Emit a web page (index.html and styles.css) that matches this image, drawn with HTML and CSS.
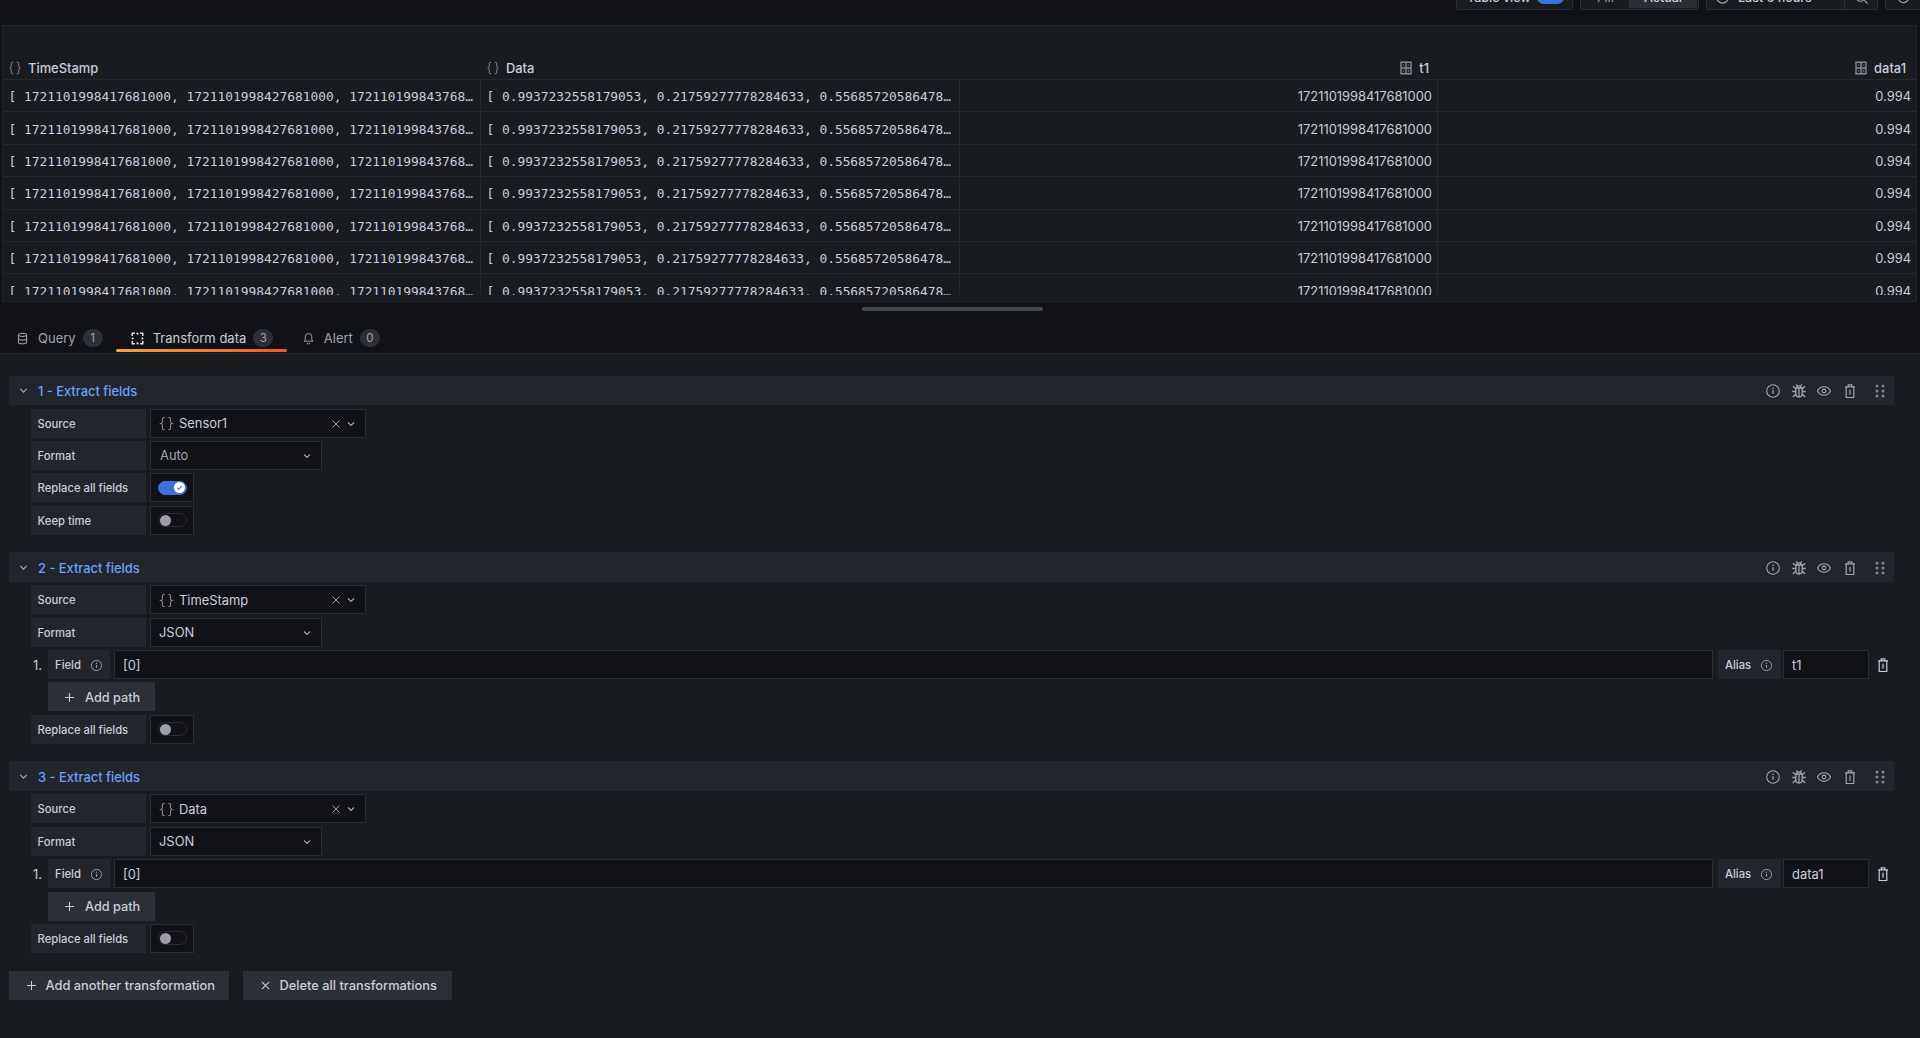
FILE: index.html
```html
<!DOCTYPE html>
<html lang="en">
<head>
<meta charset="utf-8">
<title>Transform data</title>
<link rel="stylesheet" href="styles.css">
</head>
<body>
<svg class="defs" width="0" height="0" aria-hidden="true">
  <defs>
    <symbol id="i-braces" viewBox="0 0 16 16"><path d="M6 1.5H5.2C4.2 1.5 3.7 2 3.7 3v3c0 1-.6 1.7-1.7 2 1.1.3 1.7 1 1.7 2v3c0 1 .5 1.5 1.5 1.5H6M10 1.5h.8c1 0 1.5.5 1.5 1.5v3c0 1 .6 1.7 1.7 2-1.1.3-1.7 1-1.7 2v3c0 1-.5 1.5-1.5 1.5H10" fill="none" stroke="currentColor" stroke-width="1.1"/></symbol>
    <symbol id="i-calc" viewBox="0 0 16 16"><path fill-rule="evenodd" fill="currentColor" d="M1.500.5h13v15h-13zM3 2.200v4.800h4.200V2.200zM8.800 2.200v4.800H13V2.200zM3 8.800v5h4.200v-5zM8.800 8.800v5H13v-5z"/><path d="M4.200 4.600h1.800M10 4.600h1.800M4.200 11.300h1.800M10 10.400h1.800M10 12.300h1.800" stroke="currentColor" stroke-width="1"/></symbol>
    <symbol id="i-db" viewBox="0 0 16 16"><path d="M3 3.500C3 2.300 5.200 1.500 8 1.500s5 .8 5 2v9c0 1.200-2.200 2-5 2s-5-.8-5-2zM3 3.500c0 1.200 2.200 2 5 2s5-.8 5-2M3 8c0 1.200 2.200 2 5 2s5-.8 5-2" fill="none" stroke="currentColor" stroke-width="1.300"/></symbol>
    <symbol id="i-process" viewBox="0 0 16 16"><path d="M1.500 4.800V1.500h3.300M11.200 1.500h3.300v3.300M14.500 11.200v3.300h-3.300M4.800 14.500H1.500v-3.300" fill="none" stroke="currentColor" stroke-width="1.800"/><circle cx="2" cy="8" r="1.300" fill="currentColor"/><circle cx="8" cy="2" r="1.300" fill="currentColor"/><circle cx="14" cy="8" r="1.300" fill="currentColor"/><circle cx="8" cy="14" r="1.300" fill="currentColor"/></symbol>
    <symbol id="i-bell" viewBox="0 0 16 16"><path d="M8 1.800a4 4 0 0 1 4 4v3.500l1.300 2H2.700l1.300-2V5.800a4 4 0 0 1 4-4zM6.300 13.600a1.800 1.800 0 0 0 3.400 0" fill="none" stroke="currentColor" stroke-width="1.200"/></symbol>
    <symbol id="i-chev" viewBox="0 0 16 16"><path d="M4 6l4 4 4-4" fill="none" stroke="currentColor" stroke-width="1.500"/></symbol>
    <symbol id="i-x" viewBox="0 0 16 16"><path d="M3.500 3.500l9 9M12.500 3.500l-9 9" fill="none" stroke="currentColor" stroke-width="1.300"/></symbol>
    <symbol id="i-plus" viewBox="0 0 16 16"><path d="M8 2.500v11M2.500 8h11" fill="none" stroke="currentColor" stroke-width="1.300"/></symbol>
    <symbol id="i-info" viewBox="0 0 16 16"><circle cx="8" cy="8" r="6.300" fill="none" stroke="currentColor" stroke-width="1.100"/><path d="M8 7.300v3.500" stroke="currentColor" stroke-width="1.300"/><circle cx="8" cy="5.200" r=".8" fill="currentColor"/></symbol>
    <symbol id="i-bug" viewBox="0 0 16 16"><path d="M4.800 5h6.400v5.800a3.200 3.200 0 0 1-6.400 0zM5.800 5a2.200 2.200 0 0 1 4.400 0M8 5v8.800M5.300 1.500l1.300 1.800M10.700 1.500L9.400 3.300M1.800 3.300l3 2.500M14.200 3.300l-3 2.500M1.300 8.500h3.500M14.700 8.500h-3.500M1.800 14l3.300-3.200M14.200 14l-3.300-3.200" fill="none" stroke="currentColor" stroke-width="1.300"/></symbol>
    <symbol id="i-eye" viewBox="0 0 16 16"><path d="M1.500 8C3 5.200 5.300 3.800 8 3.800S13 5.200 14.500 8C13 10.800 10.700 12.200 8 12.200S3 10.800 1.500 8z" fill="none" stroke="currentColor" stroke-width="1.100"/><circle cx="8" cy="8" r="1.900" fill="none" stroke="currentColor" stroke-width="1.100"/></symbol>
    <symbol id="i-trash" viewBox="0 0 16 16"><path d="M3 3.800h10M6.200 3.800V1.800h3.600v2M4.200 3.800v10.700h7.600V3.800M8 6.800v5" fill="none" stroke="currentColor" stroke-width="1.200"/></symbol>
    <symbol id="i-grip" viewBox="0 0 16 16"><g fill="currentColor"><circle cx="5" cy="3" r="1.500"/><circle cx="11" cy="3" r="1.500"/><circle cx="5" cy="8" r="1.500"/><circle cx="11" cy="8" r="1.500"/><circle cx="5" cy="13" r="1.500"/><circle cx="11" cy="13" r="1.500"/></g></symbol>
    <symbol id="i-clock" viewBox="0 0 16 16"><circle cx="8" cy="8" r="6" fill="none" stroke="currentColor" stroke-width="1.200"/><path d="M8 4.500V8l2.500 1.500" fill="none" stroke="currentColor" stroke-width="1.200"/></symbol>
    <symbol id="i-zoom" viewBox="0 0 16 16"><circle cx="7" cy="7" r="5" fill="none" stroke="currentColor" stroke-width="1.300"/><path d="M11 11l3.500 3.500M5 7h4" fill="none" stroke="currentColor" stroke-width="1.300"/></symbol>
    <symbol id="i-sync" viewBox="0 0 16 16"><path d="M13.500 8a5.500 5.500 0 1 1-1.700-4M12 1.500V4.300H9.200" fill="none" stroke="currentColor" stroke-width="1.300"/></symbol>
    <symbol id="i-check" viewBox="0 0 16 16"><path d="M4 8.300l2.700 2.700L12 5.500" fill="none" stroke="currentColor" stroke-width="1.800"/></symbol>
  </defs>
</svg>

<div class="page">
  <header class="toolbar">
    <div class="tool tool-view"><span>Table view</span><span class="mini-switch"></span></div>
    <div class="tool tool-radio"><span class="radio-opt">Fill</span><span class="radio-opt radio-on">Actual</span></div>
    <div class="tool tool-time"><svg class="ico ico-16"><use href="#i-clock"/></svg><span class="time-label">Last 6 hours</span><span class="time-zoom"><svg class="ico ico-16"><use href="#i-zoom"/></svg></span></div>
    <div class="tool tool-sync"><svg class="ico ico-16"><use href="#i-sync"/></svg></div>
  </header>

  <section class="panel">
    <div class="grid grid-head">
      <div class="th"><svg class="ico ico-13 muted"><use href="#i-braces"/></svg>TimeStamp</div>
      <div class="th"><svg class="ico ico-13 muted"><use href="#i-braces"/></svg>Data</div>
      <div class="th th-r"><svg class="ico ico-13 muted"><use href="#i-calc"/></svg>t1</div>
      <div class="th th-r"><svg class="ico ico-13 muted"><use href="#i-calc"/></svg>data1</div>
    </div>
    <div class="rows">
      <div class="grid row"><div class="td mono">[ 1721101998417681000, 1721101998427681000, 172110199843768…</div><div class="td mono">[ 0.9937232558179053, 0.21759277778284633, 0.55685720586478…</div><div class="td num">1721101998417681000</div><div class="td num td-last">0.994</div></div>
      <div class="grid row"><div class="td mono">[ 1721101998417681000, 1721101998427681000, 172110199843768…</div><div class="td mono">[ 0.9937232558179053, 0.21759277778284633, 0.55685720586478…</div><div class="td num">1721101998417681000</div><div class="td num td-last">0.994</div></div>
      <div class="grid row"><div class="td mono">[ 1721101998417681000, 1721101998427681000, 172110199843768…</div><div class="td mono">[ 0.9937232558179053, 0.21759277778284633, 0.55685720586478…</div><div class="td num">1721101998417681000</div><div class="td num td-last">0.994</div></div>
      <div class="grid row"><div class="td mono">[ 1721101998417681000, 1721101998427681000, 172110199843768…</div><div class="td mono">[ 0.9937232558179053, 0.21759277778284633, 0.55685720586478…</div><div class="td num">1721101998417681000</div><div class="td num td-last">0.994</div></div>
      <div class="grid row"><div class="td mono">[ 1721101998417681000, 1721101998427681000, 172110199843768…</div><div class="td mono">[ 0.9937232558179053, 0.21759277778284633, 0.55685720586478…</div><div class="td num">1721101998417681000</div><div class="td num td-last">0.994</div></div>
      <div class="grid row"><div class="td mono">[ 1721101998417681000, 1721101998427681000, 172110199843768…</div><div class="td mono">[ 0.9937232558179053, 0.21759277778284633, 0.55685720586478…</div><div class="td num">1721101998417681000</div><div class="td num td-last">0.994</div></div>
      <div class="grid row"><div class="td mono">[ 1721101998417681000, 1721101998427681000, 172110199843768…</div><div class="td mono">[ 0.9937232558179053, 0.21759277778284633, 0.55685720586478…</div><div class="td num">1721101998417681000</div><div class="td num td-last">0.994</div></div>
    </div>
  </section>

  <div class="splitter"><span class="splitter-bar"></span></div>

  <nav class="tabs">
    <div class="tab"><svg class="ico ico-13"><use href="#i-db"/></svg><span>Query</span><span class="badge">1</span></div>
    <div class="tab tab-on"><svg class="ico ico-13"><use href="#i-process"/></svg><span>Transform data</span><span class="badge">3</span></div>
    <div class="tab"><svg class="ico ico-13"><use href="#i-bell"/></svg><span>Alert</span><span class="badge">0</span></div>
  </nav>

  <main class="editor">
    <section class="transform">
      <div class="t-head">
        <svg class="ico ico-13 chev"><use href="#i-chev"/></svg>
        <span class="t-title">1 - Extract fields</span>
        <div class="t-actions">
          <svg class="ico ico-14"><use href="#i-info"/></svg>
          <svg class="ico ico-14"><use href="#i-bug"/></svg>
          <svg class="ico ico-14"><use href="#i-eye"/></svg>
          <svg class="ico ico-14"><use href="#i-trash"/></svg>
          <svg class="ico ico-14 grip"><use href="#i-grip"/></svg>
        </div>
      </div>
      <div class="t-body">
        <div class="f-row"><label class="f-label">Source</label><div class="select select-src"><svg class="ico ico-13 muted"><use href="#i-braces"/></svg><span class="s-val">Sensor1</span><svg class="ico ico-11"><use href="#i-x"/></svg><svg class="ico ico-11"><use href="#i-chev"/></svg></div></div>
        <div class="f-row"><label class="f-label">Format</label><div class="select select-fmt"><span class="s-val s-ph">Auto</span><svg class="ico ico-11"><use href="#i-chev"/></svg></div></div>
        <div class="f-row"><label class="f-label">Replace all fields</label><div class="switch-box"><span class="switch switch-on"><span class="knob"><svg class="ico ico-9"><use href="#i-check"/></svg></span></span></div></div>
        <div class="f-row"><label class="f-label">Keep time</label><div class="switch-box"><span class="switch"><span class="knob"></span></span></div></div>
      </div>
    </section>

    <section class="transform">
      <div class="t-head">
        <svg class="ico ico-13 chev"><use href="#i-chev"/></svg>
        <span class="t-title">2 - Extract fields</span>
        <div class="t-actions">
          <svg class="ico ico-14"><use href="#i-info"/></svg>
          <svg class="ico ico-14"><use href="#i-bug"/></svg>
          <svg class="ico ico-14"><use href="#i-eye"/></svg>
          <svg class="ico ico-14"><use href="#i-trash"/></svg>
          <svg class="ico ico-14 grip"><use href="#i-grip"/></svg>
        </div>
      </div>
      <div class="t-body">
        <div class="f-row"><label class="f-label">Source</label><div class="select select-src"><svg class="ico ico-13 muted"><use href="#i-braces"/></svg><span class="s-val">TimeStamp</span><svg class="ico ico-11"><use href="#i-x"/></svg><svg class="ico ico-11"><use href="#i-chev"/></svg></div></div>
        <div class="f-row"><label class="f-label">Format</label><div class="select select-fmt"><span class="s-val">JSON</span><svg class="ico ico-11"><use href="#i-chev"/></svg></div></div>
        <div class="f-row path-row">
          <span class="path-idx">1.</span>
          <label class="f-label l-field">Field<svg class="ico ico-12"><use href="#i-info"/></svg></label>
          <div class="input input-grow">[0]</div>
          <label class="f-label l-alias">Alias<svg class="ico ico-12"><use href="#i-info"/></svg></label>
          <div class="input input-alias">t1</div>
          <svg class="ico ico-14 path-trash"><use href="#i-trash"/></svg>
        </div>
        <div class="f-row add-row"><button class="btn btn-add"><svg class="ico ico-13"><use href="#i-plus"/></svg>Add path</button></div>
        <div class="f-row"><label class="f-label">Replace all fields</label><div class="switch-box"><span class="switch"><span class="knob"></span></span></div></div>
      </div>
    </section>

    <section class="transform">
      <div class="t-head">
        <svg class="ico ico-13 chev"><use href="#i-chev"/></svg>
        <span class="t-title">3 - Extract fields</span>
        <div class="t-actions">
          <svg class="ico ico-14"><use href="#i-info"/></svg>
          <svg class="ico ico-14"><use href="#i-bug"/></svg>
          <svg class="ico ico-14"><use href="#i-eye"/></svg>
          <svg class="ico ico-14"><use href="#i-trash"/></svg>
          <svg class="ico ico-14 grip"><use href="#i-grip"/></svg>
        </div>
      </div>
      <div class="t-body">
        <div class="f-row"><label class="f-label">Source</label><div class="select select-src"><svg class="ico ico-13 muted"><use href="#i-braces"/></svg><span class="s-val">Data</span><svg class="ico ico-11"><use href="#i-x"/></svg><svg class="ico ico-11"><use href="#i-chev"/></svg></div></div>
        <div class="f-row"><label class="f-label">Format</label><div class="select select-fmt"><span class="s-val">JSON</span><svg class="ico ico-11"><use href="#i-chev"/></svg></div></div>
        <div class="f-row path-row">
          <span class="path-idx">1.</span>
          <label class="f-label l-field">Field<svg class="ico ico-12"><use href="#i-info"/></svg></label>
          <div class="input input-grow">[0]</div>
          <label class="f-label l-alias">Alias<svg class="ico ico-12"><use href="#i-info"/></svg></label>
          <div class="input input-alias">data1</div>
          <svg class="ico ico-14 path-trash"><use href="#i-trash"/></svg>
        </div>
        <div class="f-row add-row"><button class="btn btn-add"><svg class="ico ico-13"><use href="#i-plus"/></svg>Add path</button></div>
        <div class="f-row"><label class="f-label">Replace all fields</label><div class="switch-box"><span class="switch"><span class="knob"></span></span></div></div>
      </div>
    </section>

    <div class="actions">
      <button class="btn btn-main btn-first"><svg class="ico ico-13"><use href="#i-plus"/></svg>Add another transformation</button>
      <button class="btn btn-main"><svg class="ico ico-13"><use href="#i-x"/></svg>Delete all transformations</button>
    </div>
  </main>
</div>
</body>
</html>
```

FILE: styles.css
```css
* { box-sizing: border-box; }
html, body { margin: 0; padding: 0; height: 100%; }
body {
  background: #111217;
  color: #ccccdc;
  font-family: Inter, "Liberation Sans", sans-serif;
  font-size: 13px;
  overflow: hidden;
}
.defs { position: absolute; }
.page { width: 1920px; height: 1038px; display: flex; flex-direction: column; }

.ico { display: block; flex: none; color: #a3a4ad; }
.ico-9 { width: 9px; height: 9px; }
.ico-11 { width: 12px; height: 12px; }
.ico-12 { width: 13px; height: 13px; }
.ico-13 { width: 13px; height: 13px; }
.ico-14 { width: 16px; height: 16px; }
.ico-16 { width: 15px; height: 15px; }
.muted { color: #8b8c95; }

/* Top toolbar, cut by the window edge */
.toolbar {
  height: 25px;
  flex: none;
  padding: 0 0 15px 1456px;
  display: flex;
  align-items: flex-end;
  gap: 7px;
  overflow: hidden;
  margin-right: -40px;
}
.tool {
  height: 25px;
  flex: none;
  display: flex;
  align-items: center;
  background: #181b1f;
  border: 1px solid #2b2e34;
  border-radius: 2px;
  font-size: 12.5px;
  font-weight: 500;
  color: #ccccdc;
}
.tool-view { width: 117px; padding: 0 8px 0 10px; justify-content: space-between; }
.mini-switch { width: 27px; height: 13px; border-radius: 7px; background: #3d71d9; }
.tool-radio { width: 119px; padding: 1px; color: #85868e; }
.radio-opt { width: 47px; height: 100%; display: flex; align-items: center; justify-content: center; }
.radio-on { background: #2a2d33; color: #ccccdc; flex: 1; }
.tool-time { width: 172px; padding-left: 8px; gap: 8px; }
.time-label { flex: 1; }
.time-zoom { width: 33px; height: 100%; border-left: 1px solid #2b2e34; display: flex; align-items: center; justify-content: center; }
.tool-sync { width: 36px; justify-content: center; }

/* Table panel */
.panel {
  flex: none;
  height: 277px;
  margin: 0 3px 0 2px;
  border: 1px solid #22252b;
  background: #181b1f;
}
.grid { display: grid; grid-template-columns: 478px 479px 478px 1fr; }
.grid-head { height: 54px; border-bottom: 1px solid #25282e; align-items: end; }
.th {
  display: flex;
  align-items: center;
  gap: 6px;
  height: 26px;
  padding: 4px 8px 0 5px;
  font-size: 12.900px;
  font-weight: 500;
  color: #ccccdc;
  line-height: 21px;
}
.th .ico { width: 14px; height: 14px; }
.th-r { justify-content: flex-end; padding-right: 9px; }
.th-r:last-child { padding-right: 10px; }
.rows { height: 215px; overflow: hidden; }
.row { height: 32.400px; border-bottom: 1px solid #25282e; }
.td {
  display: flex;
  align-items: center;
  padding: 2px 4px 0 5.500px;
  white-space: pre;
  overflow: hidden;
  border-right: 1px solid #25282e;
  font-size: 12.900px;
  color: #ccccdc;
}
.mono { font-family: "DejaVu Sans Mono", "Liberation Mono", monospace; font-size: 12.860px; }
.num { justify-content: flex-end; padding-right: 5px; }
.td-last { border-right: 0; }

/* Split handle */
.splitter { flex: none; height: 14px; padding-top: 5px; display: flex; justify-content: center; padding-right: 15px; }
.splitter-bar { width: 181px; height: 3.500px; border-radius: 2px; background: #46484f; }

/* Tabs */
.tabs {
  flex: none;
  height: 38px;
  padding-left: 16px;
  display: flex;
  border-bottom: 1px solid #25282e;
  font-size: 13px;
}
.tab {
  position: relative;
  height: 37px;
  padding: 7px 0 0;
  display: flex;
  align-items: center;
  gap: 9px;
  color: #a3a4ad;
  font-weight: 400;
  margin-right: 13px;
  white-space: nowrap;
}
.tab-on { color: #ccccdc; padding: 7px 14px 0 15px; margin-right: 0; margin-left: 0; }
.tab:last-child { margin-left: 14.500px; }
.tab-on::after {
  content: "";
  position: absolute;
  left: 0;
  right: 0;
  bottom: 1px;
  height: 3px;
  border-radius: 2px;
  background: linear-gradient(90deg, #f2a33a, #f05a28);
}
.tab-on .ico { color: #e4e4ec; }
.badge {
  width: 20px;
  height: 18px;
  margin-left: -2px;
  border-radius: 9px;
  background: #2c2f35;
  color: #a3a4ad;
  font-size: 11.500px;
  display: flex;
  align-items: center;
  justify-content: center;
}

/* Transformations */
.editor {
  flex: 1;
  background: #181b1f;
  padding: 21.500px 26px 0 9px;
}
.transform { margin-bottom: 17.600px; }
.t-head {
  height: 29.500px;
  margin-bottom: 3.500px;
  padding: 0 6.500px 0 8px;
  background: #22252b;
  display: flex;
  align-items: center;
}
.chev { width: 13px; height: 13px; }
.t-title { margin-left: 8px; padding-top: 3px; font-size: 12.900px; font-weight: 500; color: #6e9fff; }
.t-actions { margin-left: auto; padding-top: 1px; display: flex; align-items: center; gap: 9.400px; }
.grip { margin-left: 4.600px; color: #85868e; }
.t-body { padding-left: 22px; display: flex; flex-direction: column; gap: 3.400px; }
.f-row { height: 29px; display: flex; align-items: stretch; }
.f-label {
  width: 115px;
  margin-right: 4px;
  padding: 1px 0 0 6.500px;
  display: flex;
  align-items: center;
  background: #22252b;
  font-size: 11.250px;
  font-weight: 500;
  color: #ccccdc;
  white-space: nowrap;
}
.select, .input, .switch-box {
  background: #111217;
  border: 1px solid #2a2d33;
  display: flex;
  align-items: center;
}
.select-src { width: 216px; padding: 1px 8px 0 7.500px; gap: 3px; }
.select-src > .ico:first-child { width: 15px; height: 15px; }
.select-src .s-val { margin-left: 2.500px; flex: 1; }
.select-fmt { width: 172px; padding: 1px 8px 0 8px; }
.select-fmt .s-val { flex: 1; }
.s-val { font-size: 12.900px; color: #ccccdc; }
.s-ph { color: #a3a4ad; padding-left: 1px; }
.switch-box { width: 44px; justify-content: center; }
.switch {
  width: 29px;
  height: 14px;
  border: 1px solid #2a2d33;
  border-radius: 7px;
  display: flex;
  align-items: center;
  padding: 0 1px;
}
.knob { width: 11px; height: 11px; border-radius: 50%; background: #9d9ea6; display: flex; align-items: center; justify-content: center; }
.switch-on { background: #3d71d9; border-color: #3d71d9; justify-content: flex-end; }
.switch-on .knob { background: #fff; }
.switch-on .ico { color: #3d71d9; }

.path-row { align-items: stretch; }
.path-idx { width: 17px; display: flex; align-items: center; padding: 1px 0 0 2px; font-size: 12.900px; color: #ccccdc; }
.l-field { width: 62px; padding-left: 7px; gap: 9px; }
.input { padding: 1px 0 0 8px; font-size: 12.900px; color: #ccccdc; }
.input-grow { flex: 1; }
.l-alias { width: 63px; margin: 0 2px 0 5px; padding-left: 7px; gap: 9px; }
.input-alias { width: 86px; }
.path-trash { align-self: center; margin: 0 3px 0 6px; color: #ccccdc; }

.add-row { padding-left: 17px; }
.btn {
  border: 0;
  background: #2c2f35;
  color: #ccccdc;
  font-family: inherit;
  font-size: 12.700px;
  font-weight: 500;
  display: flex;
  align-items: center;
  padding: 1px 0 0;
}
.btn .ico { color: #ccccdc; }
.btn-add { width: 107px; padding-left: 15px; gap: 9px; }
.actions { display: flex; gap: 14px; }
.btn-main { height: 29px; padding: 1px 0 0 15.500px; gap: 8px; width: 209px; font-size: 12.850px; }
.btn-first { width: 220px; }
```
